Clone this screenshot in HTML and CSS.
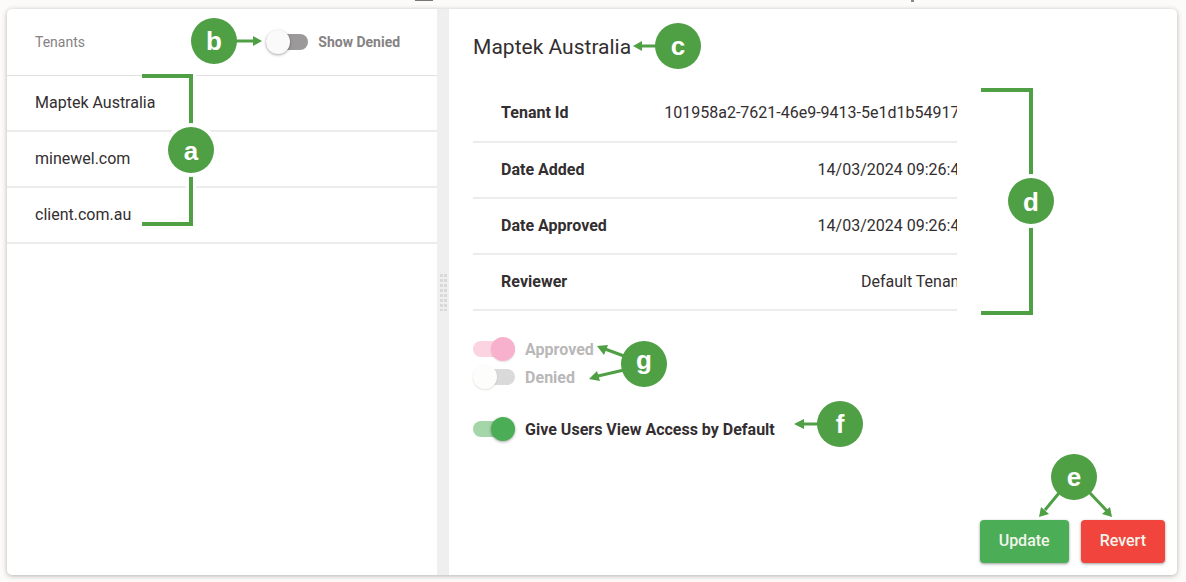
FILE: index.html
```
<!DOCTYPE html>
<html lang="en">
<head>
    <meta charset="UTF-8">
    <meta name="viewport" content="width=device-width, initial-scale=1.0">
    <title>Tenants</title>
    <link rel="stylesheet" href="styles.css">
</head>
<body>
    <div class="page-top">
        <span class="mark-wide"></span>
        <span class="mark-small"></span>
    </div>

    <main class="card">
        <section class="tenants">
            <header class="tenants-header">
                <span class="tenants-title">Tenants</span>
                <label class="toggle toggle-small">
                    <input type="checkbox" class="switch">
                    <span>Show Denied</span>
                </label>
            </header>
            <ul class="tenant-list">
                <li><button type="button" class="tenant">Maptek Australia</button></li>
                <li><button type="button" class="tenant">minewel.com</button></li>
                <li><button type="button" class="tenant">client.com.au</button></li>
            </ul>

            <svg class="callout callout-b" width="76" height="56" viewBox="188 13 76 56">
                <path class="line" d="M236 41H254"/>
                <path class="head" d="M262 41L253 36V46Z"/>
                <circle class="dot" cx="214" cy="41" r="23"/>
                <text x="214" y="50">b</text>
            </svg>
            <svg class="callout callout-a" width="82" height="166" viewBox="136 68 82 166">
                <path class="halo-line" d="M142 76H191V224H142"/>
                <path class="line bracket" d="M142 76H191V224H142"/>
                <circle class="halo" cx="191" cy="150" r="27"/>
                <circle class="dot" cx="191" cy="150" r="23"/>
                <text x="191" y="160">a</text>
            </svg>
        </section>

        <div class="splitter">
            <svg width="7" height="37" viewBox="0 0 7 37">
                <path class="grip" d="M1.5 0V37M5.5 0V37"/>
            </svg>
        </div>

        <section class="details">
            <h1>Maptek Australia</h1>

            <div class="table-clip">
                <table>
                    <tr><th scope="row">Tenant Id</th><td>101958a2-7621-46e9-9413-5e1d1b54917</td></tr>
                    <tr><th scope="row">Date Added</th><td>14/03/2024 09:26:4</td></tr>
                    <tr><th scope="row">Date Approved</th><td>14/03/2024 09:26:4</td></tr>
                    <tr><th scope="row">Reviewer</th><td>Default Tenan</td></tr>
                </table>
            </div>

            <div class="toggles">
                <label class="toggle toggle-disabled">
                    <input type="checkbox" class="switch switch-pink" checked disabled>
                    <span>Approved</span>
                </label>
                <label class="toggle toggle-disabled">
                    <input type="checkbox" class="switch" disabled>
                    <span>Denied</span>
                </label>
                <label class="toggle toggle-access">
                    <input type="checkbox" class="switch switch-green" checked>
                    <span>Give Users View Access by Default</span>
                </label>
            </div>

            <div class="actions">
                <button type="button" class="btn btn-update">Update</button>
                <button type="button" class="btn btn-revert">Revert</button>
            </div>

            <svg class="callout callout-c" width="72" height="50" viewBox="632 21 72 50">
                <path class="line" d="M656 46H641"/>
                <path class="head" d="M633 46L642 41V51Z"/>
                <circle class="dot" cx="678" cy="46" r="23"/>
                <text x="678" y="55">c</text>
            </svg>
            <svg class="callout callout-d" width="78" height="232" viewBox="978 86 78 232">
                <path class="line bracket" d="M981 90H1031V313H981"/>
                <circle class="halo" cx="1031" cy="201" r="27"/>
                <circle class="dot" cx="1031" cy="201" r="23"/>
                <text x="1031" y="211">d</text>
            </svg>
            <svg class="callout callout-g" width="82" height="50" viewBox="587 339 82 50">
                <path class="line" d="M624 356L605 349M624 370L598 376"/>
                <path class="head" d="M597 346L608 345L604 355ZM589 379L597 371L600 381Z"/>
                <circle class="dot" cx="644" cy="364" r="23"/>
                <text x="644" y="369">g</text>
            </svg>
            <svg class="callout callout-f" width="72" height="50" viewBox="793 399 72 50">
                <path class="line" d="M820 424H803"/>
                <path class="head" d="M794 424L804 419V429Z"/>
                <circle class="dot" cx="840" cy="424" r="23"/>
                <text x="840" y="433">f</text>
            </svg>
            <svg class="callout callout-e" width="78" height="68" viewBox="1037 452 78 68">
                <path class="line" d="M1059 493L1045 510M1090 493L1107 511"/>
                <path class="head" d="M1039 517L1041 507L1049 514ZM1112 517L1102 514L1110 507Z"/>
                <circle class="dot" cx="1074" cy="477" r="23"/>
                <text x="1074" y="486">e</text>
            </svg>
        </section>
    </main>
</body>
</html>
```

FILE: styles.css
```
* {
    box-sizing: border-box;
}

body {
    margin: 0;
    min-height: 100vh;
    display: flex;
    flex-direction: column;
    background: #fcfbf9;
    font-family: Roboto, "Liberation Sans", sans-serif;
    font-size: 16px;
    color: #332e30;
}

.page-top {
    display: flex;
    height: 9px;
    padding-left: 35%;
}

.mark-wide {
    width: 18px;
    height: 1px;
    background: #777;
}

.mark-small {
    width: 3px;
    height: 2px;
    margin-left: 62%;
    background: #888;
}

.card {
    flex: 1;
    display: grid;
    grid-template-columns: 13fr 12px 22fr;
    margin: 0 9px 7px 7px;
    background: #fff;
    border-radius: 5px;
    box-shadow: 0 1px 5px rgba(60, 40, 50, 0.35);
}

/* tenant list */
.tenants {
    position: relative;
}

.tenants-header {
    display: flex;
    align-items: center;
    justify-content: space-between;
    height: 67px;
    padding: 0 37px 0 28px;
    border-bottom: 1px solid #e2e1e1;
    color: #858283;
    font-size: 14px;
}

.tenant-list {
    list-style: none;
    margin: 0;
    padding: 0;
}

.tenant {
    display: block;
    width: 100%;
    height: 56px;
    padding: 0 28px 2px;
    border: 0;
    border-bottom: 2px solid #ececec;
    background: none;
    font: inherit;
    color: inherit;
    text-align: left;
}

.splitter {
    display: flex;
    align-items: center;
    justify-content: center;
    background: #efefef;
}

.grip {
    fill: none;
    stroke: #dad8d8;
    stroke-width: 3;
    stroke-dasharray: 3 2;
}

/* details */
.details {
    position: relative;
    display: flex;
    flex-direction: column;
    padding: 24px 12px 12px 24px;
}

h1 {
    margin: 0;
    font-size: 21px;
    font-weight: 400;
    line-height: 28px;
}

.table-clip {
    width: 70%;
    margin-top: 25px;
    overflow: hidden;
}

table {
    width: calc(100% + 2px);
    border-collapse: collapse;
}

th,
td {
    height: 56px;
    padding: 0 0 2px;
    border-bottom: 2px solid #ececec;
    white-space: nowrap;
}

th {
    padding-left: 28px;
    font-weight: 700;
    text-align: left;
}

td {
    text-align: right;
}

.toggles {
    display: flex;
    flex-direction: column;
    align-items: flex-start;
    margin-top: 24px;
}

.toggle {
    display: flex;
    align-items: center;
    gap: 10px;
    height: 28px;
    font-weight: 700;
}

.toggle-small {
    font-size: 14px;
}

.toggle-disabled {
    color: #b9b7b8;
}

.toggle-access {
    margin-top: 24px;
}

.switch {
    appearance: none;
    display: flex;
    align-items: center;
    width: 42px;
    height: 16px;
    margin: 0;
    border-radius: 8px;
    background: #9b9999;
}

.switch::before {
    content: "";
    flex: none;
    width: 24px;
    height: 24px;
    border-radius: 50%;
    background: #fafafa;
    box-shadow: 0 1px 3px rgba(0, 0, 0, 0.35);
}

.switch:checked {
    justify-content: flex-end;
}

.switch:disabled {
    background: #dadada;
}

.switch:disabled::before {
    background: #fdfdfc;
    box-shadow: 0 1px 2px rgba(0, 0, 0, 0.12);
}

.switch-pink:disabled {
    background: #fbd3e1;
}

.switch-pink:disabled::before {
    background: #f8b1cc;
}

.switch-green {
    background: #a4d6aa;
}

.switch-green::before {
    background: #4bae57;
}

.actions {
    display: flex;
    justify-content: flex-end;
    gap: 12px;
    margin-top: auto;
}

.btn {
    height: 43px;
    padding: 0 19px 2px;
    border: 0;
    border-radius: 4px;
    box-shadow: 0 1px 3px rgba(0, 0, 0, 0.4);
    color: #f3f5ec;
    font-family: inherit;
    font-size: 16px;
    font-weight: 500;
}

.btn-update {
    background: #4bae57;
}

.btn-revert {
    background: #f1443c;
}

/* callouts drawn over the panes */
.callout {
    position: absolute;
    pointer-events: none;
}

.callout-a {
    left: 129px;
    top: 59px;
}

.callout-b {
    left: 181px;
    top: 4px;
}

.callout-c {
    left: 183px;
    top: 12px;
}

.callout-d {
    left: 529px;
    top: 77px;
}

.callout-e {
    right: 62px;
    bottom: 55px;
}

.callout-f {
    left: 344px;
    top: 390px;
}

.callout-g {
    left: 138px;
    top: 330px;
}

.dot,
.head {
    fill: #4f9f45;
}

.halo {
    fill: #fff;
}

.line {
    fill: none;
    stroke: #4f9f45;
    stroke-width: 3;
}

.bracket {
    stroke-width: 4;
}

.halo-line {
    fill: none;
    stroke: #fff;
    stroke-width: 10;
}

.callout text {
    fill: #fff;
    font-family: "Liberation Sans", sans-serif;
    font-size: 26px;
    font-weight: 700;
    text-anchor: middle;
}
```
